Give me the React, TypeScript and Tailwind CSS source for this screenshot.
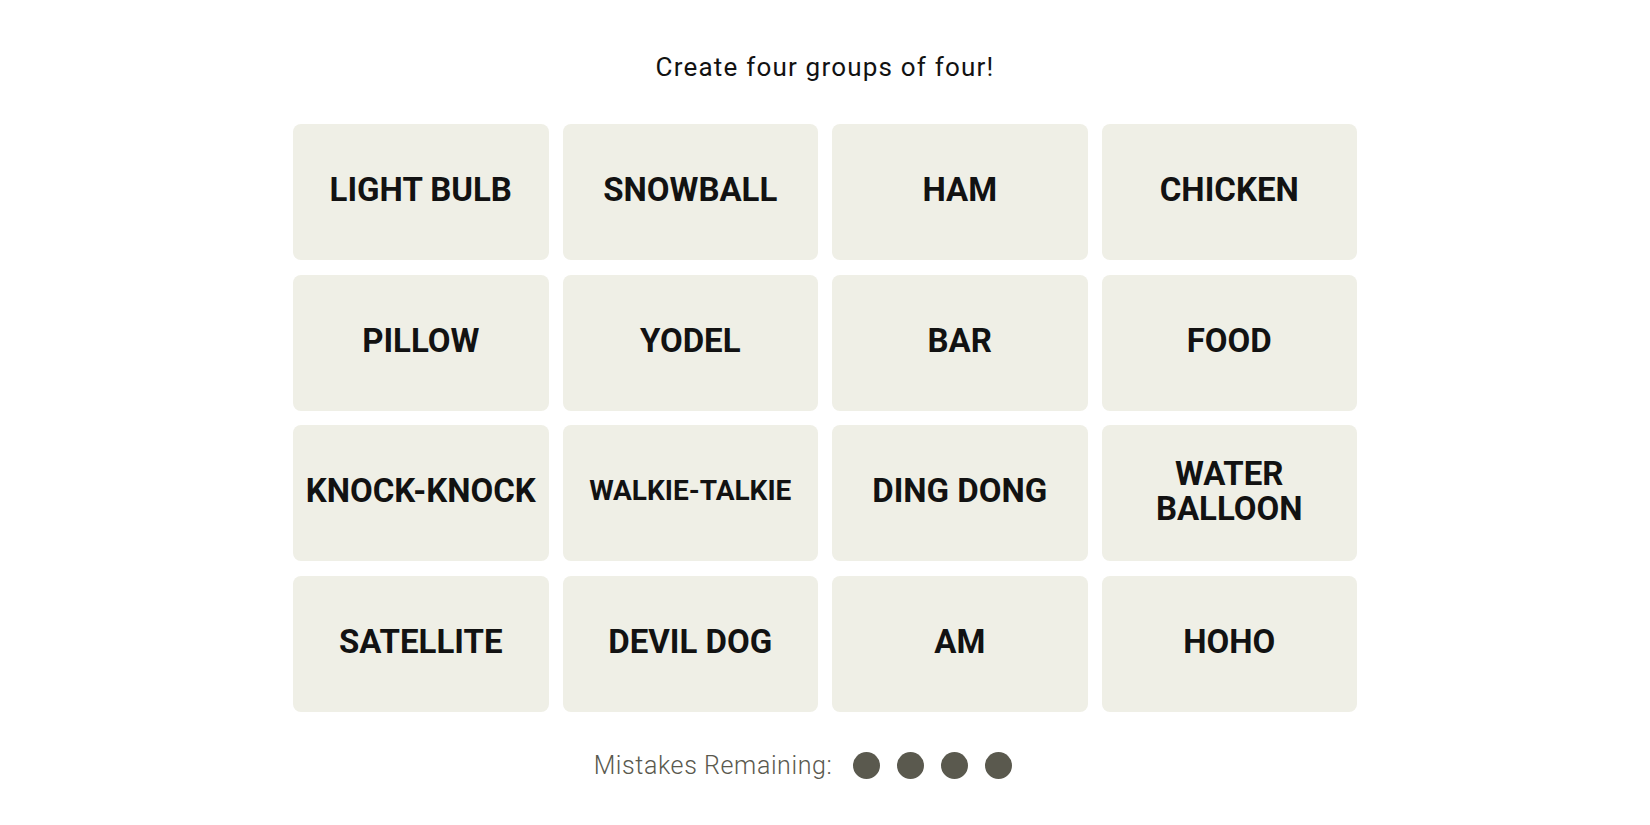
import React from "react";

const words: { t: string; small?: boolean }[] = [
  { t: "LIGHT BULB" },
  { t: "SNOWBALL" },
  { t: "HAM" },
  { t: "CHICKEN" },
  { t: "PILLOW" },
  { t: "YODEL" },
  { t: "BAR" },
  { t: "FOOD" },
  { t: "KNOCK-KNOCK" },
  { t: "WALKIE-TALKIE", small: true },
  { t: "DING DONG" },
  { t: "WATER BALLOON" },
  { t: "SATELLITE" },
  { t: "DEVIL DOG" },
  { t: "AM" },
  { t: "HOHO" },
];

export default function App() {
  return (
    <div
      className="w-full h-[825px] bg-white flex flex-col items-center text-[#121212]"
      style={{ fontFamily: "Roboto, 'Liberation Sans', sans-serif" }}
    >
      <p className="pt-[51px] text-[26px] leading-[32px] tracking-[1.2px] font-normal">
        Create four groups of four!
      </p>
      <div className="mt-[41px] w-[1064px] grid grid-cols-4 gap-x-[14px] gap-y-[14.5px]">
        {words.map((w) => (
          <div
            key={w.t}
            className="h-[136px] rounded-[8px] bg-[#efefe6] flex items-center justify-center text-center pb-[5px] px-[8px]"
          >
            <span
              className={
                w.small
                  ? "font-bold text-[28px] leading-[35px]"
                  : "font-bold text-[33px] leading-[35px]"
              }
            >
              {w.t === "WATER BALLOON" ? (
                <>
                  WATER
                  <br />
                  BALLOON
                </>
              ) : (
                w.t
              )}
            </span>
          </div>
        ))}
      </div>
      <div className="mt-[40px] flex items-center pr-[44px]">
        <span className="text-[25px] leading-[27px] tracking-[0.6px] font-light text-[#5a594e]">
          Mistakes Remaining:
        </span>
        <div className="ml-[21px] flex items-center gap-[17px]">
          <span className="w-[27px] h-[27px] rounded-full bg-[#5a594e]" />
          <span className="w-[27px] h-[27px] rounded-full bg-[#5a594e]" />
          <span className="w-[27px] h-[27px] rounded-full bg-[#5a594e]" />
          <span className="w-[27px] h-[27px] rounded-full bg-[#5a594e]" />
        </div>
      </div>
    </div>
  );
}
